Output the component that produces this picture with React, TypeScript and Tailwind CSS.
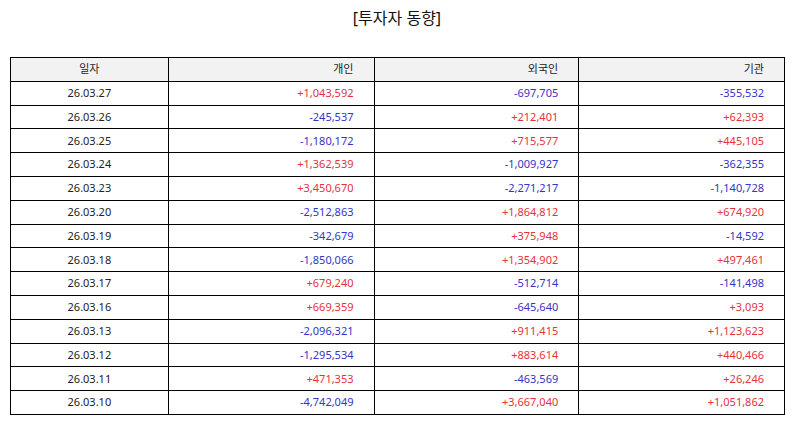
const rows: [string, string, string, string][] = [
  ["26.03.27", "+1,043,592", "-697,705", "-355,532"],
  ["26.03.26", "-245,537", "+212,401", "+62,393"],
  ["26.03.25", "-1,180,172", "+715,577", "+445,105"],
  ["26.03.24", "+1,362,539", "-1,009,927", "-362,355"],
  ["26.03.23", "+3,450,670", "-2,271,217", "-1,140,728"],
  ["26.03.20", "-2,512,863", "+1,864,812", "+674,920"],
  ["26.03.19", "-342,679", "+375,948", "-14,592"],
  ["26.03.18", "-1,850,066", "+1,354,902", "+497,461"],
  ["26.03.17", "+679,240", "-512,714", "-141,498"],
  ["26.03.16", "+669,359", "-645,640", "+3,093"],
  ["26.03.13", "-2,096,321", "+911,415", "+1,123,623"],
  ["26.03.12", "-1,295,534", "+883,614", "+440,466"],
  ["26.03.11", "+471,353", "-463,569", "+26,246"],
  ["26.03.10", "-4,742,049", "+3,667,040", "+1,051,862"],
];

const numClass = (v: string) =>
  v.startsWith("+") ? "text-[#e5323c]" : "text-[#3434c8]";

export default function App() {
  return (
    <div className="w-[794px] h-[425px] bg-white font-['Noto_Sans','Noto_Sans_CJK_KR',sans-serif] text-[#222]">
      {/* Title */}
      <h1 className="pt-[5px] h-[57px] text-center text-[16px] leading-[26px] font-normal text-[#111]">
        [투자자 동향]
      </h1>

      <table className="ml-[10px] w-[775px] border-collapse text-[11px]">
        <colgroup>
          <col className="w-[158px]" />
          <col className="w-[206px]" />
          <col className="w-[205px]" />
          <col className="w-[206px]" />
        </colgroup>
        <thead>
          <tr className="h-[23.8px] bg-[#f2f2f2]">
            <th className="border border-black font-normal text-center">일자</th>
            <th className="border border-black font-normal text-right pr-[20px]">개인</th>
            <th className="border border-black font-normal text-right pr-[20px]">외국인</th>
            <th className="border border-black font-normal text-right pr-[20px]">기관</th>
          </tr>
        </thead>
        <tbody>
          {rows.map(([date, ind, frn, inst]) => (
            <tr key={date} className="h-[23.8px]">
              <td className="border border-black text-center">{date}</td>
              <td className={`border border-black text-right pr-[20px] ${numClass(ind)}`}>{ind}</td>
              <td className={`border border-black text-right pr-[20px] ${numClass(frn)}`}>{frn}</td>
              <td className={`border border-black text-right pr-[20px] ${numClass(inst)}`}>{inst}</td>
            </tr>
          ))}
        </tbody>
      </table>
    </div>
  );
}
